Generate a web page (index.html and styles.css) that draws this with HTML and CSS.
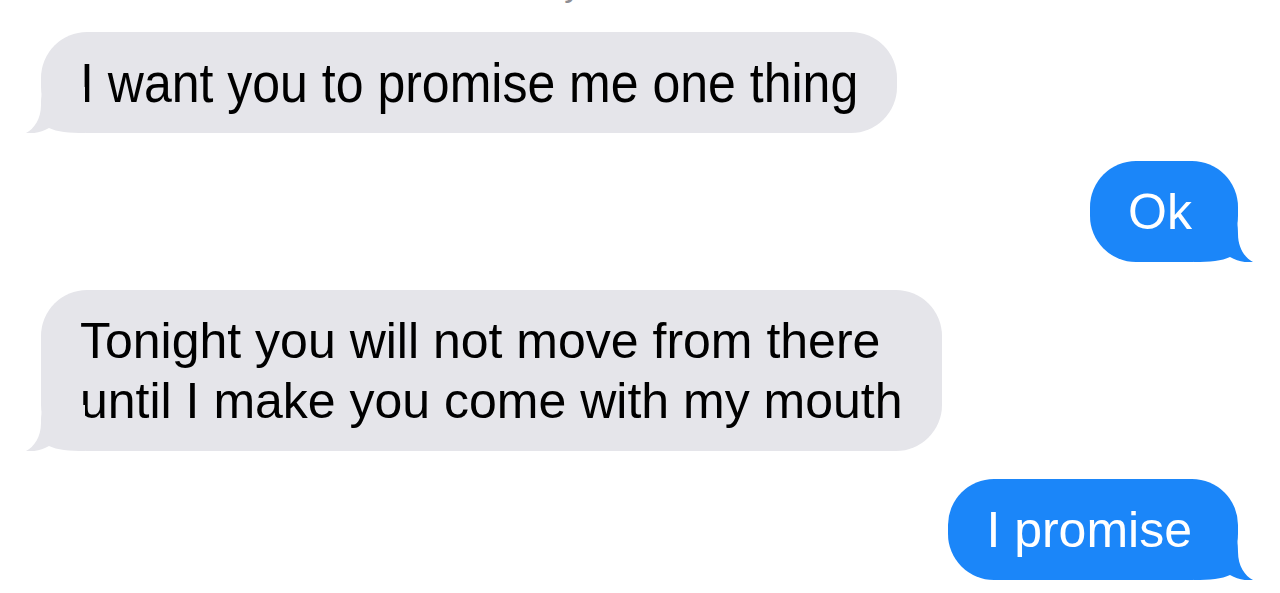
FILE: index.html
```html
<!DOCTYPE html>
<html lang="en">
<head>
<meta charset="utf-8">
<title>Messages</title>
<link rel="stylesheet" href="styles.css">
</head>
<body>
<div class="chat">
  <div class="stamp"><span class="stamp-text">Today 10:41 PM</span></div>

  <div class="bubble them">
    <span class="tall">I want you to promise me one thing</span>
    <svg class="tail" viewBox="-16 -46 60 46" width="60" height="46" aria-hidden="true"><path d="M4 -46 C1 -42 0 -38 0 -28 C0 -14 -7 -4 -15 0 C-7 1 1 -1 8 -5 C16 -1 28 0 44 0 L44 -46 Z"/></svg>
  </div>

  <div class="bubble me">
    Ok
    <svg class="tail" viewBox="-16 -46 60 46" width="60" height="46" aria-hidden="true"><path d="M4 -46 C1 -42 0 -38 0 -28 C0 -14 -7 -4 -15 0 C-7 1 1 -1 8 -5 C16 -1 28 0 44 0 L44 -46 Z"/></svg>
  </div>

  <div class="bubble them">
    Tonight you will not move from there<br>until I make you come with my mouth
    <svg class="tail" viewBox="-16 -46 60 46" width="60" height="46" aria-hidden="true"><path d="M4 -46 C1 -42 0 -38 0 -28 C0 -14 -7 -4 -15 0 C-7 1 1 -1 8 -5 C16 -1 28 0 44 0 L44 -46 Z"/></svg>
  </div>

  <div class="bubble me">
    I promise
    <svg class="tail" viewBox="-16 -46 60 46" width="60" height="46" aria-hidden="true"><path d="M4 -46 C1 -42 0 -38 0 -28 C0 -14 -7 -4 -15 0 C-7 1 1 -1 8 -5 C16 -1 28 0 44 0 L44 -46 Z"/></svg>
  </div>
</div>
</body>
</html>
```

FILE: styles.css
```css
html, body {
  margin: 0;
  padding: 0;
  background: #ffffff;
}

body {
  font-family: "Liberation Sans", Arial, Helvetica, sans-serif;
  width: 1280px;
  height: 593px;
  overflow: hidden;
}

.chat {
  display: flex;
  flex-direction: column;
  gap: 28px;
  padding: 0 42px 0 41px;
}

.stamp {
  height: 10px;
  margin-bottom: -6px;
  overflow: hidden;
  text-align: center;
  padding-right: 52px;
}

.stamp-text {
  display: block;
  font-size: 34px;
  line-height: 34px;
  color: #8e8e93;
  margin-top: -33px;
}

.bubble {
  position: relative;
  font-size: 50px;
  line-height: 60px;
  padding: 20.5px 39px;
  border-radius: 46px;
  white-space: nowrap;
}

.bubble.them {
  align-self: flex-start;
  background: #e5e5ea;
  color: #000000;
}

.bubble.me {
  align-self: flex-end;
  background: #1b86f9;
  color: #ffffff;
  padding-left: 38px;
  padding-right: 46px;
}

.tall {
  display: inline-block;
  transform: translateY(2px) scaleY(1.12);
  transform-origin: 50% 46px;
}

.tail {
  position: absolute;
  bottom: 0;
  display: block;
}

.them .tail {
  left: -16px;
  fill: #e5e5ea;
}

.me .tail {
  right: -16px;
  fill: #1b86f9;
  transform: scaleX(-1);
}
```
